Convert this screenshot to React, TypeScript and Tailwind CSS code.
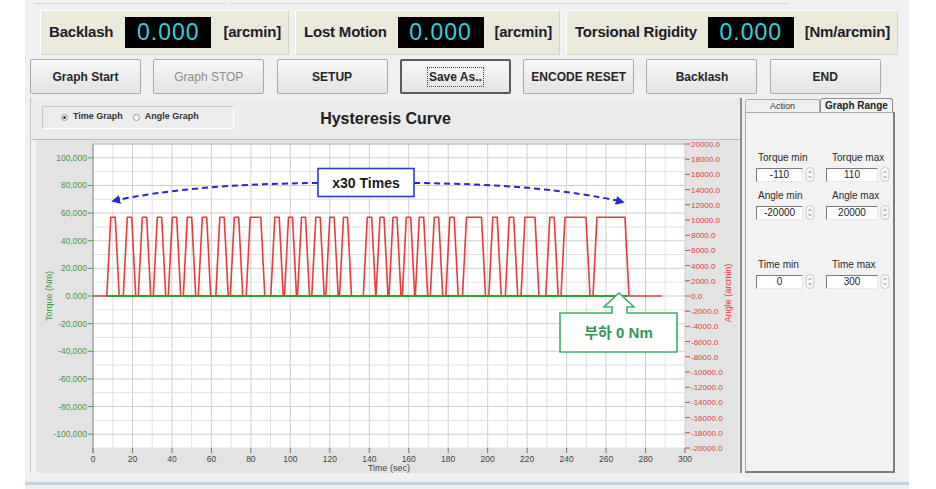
import React from 'react';

const SANS = '"Liberation Sans", Arial, sans-serif';

// chart scale helpers, page coordinates (svg viewBox starts at the panel origin)
const xs = (t: number) => 93 + (t * 592) / 300;
const ys = (v: number) => 296 - (v * 152) / 110;
const ya = (a: number) => 296 - (a * 152) / 20000;

// [center x, half width of the flat top]
const pulses: [number, number][] = [
  [113, 2.2], [129.5, 2.2], [144.5, 2.2], [159.5, 2.2], [174.5, 2.2], [189.5, 2.2], [204.5, 2.2], [222, 2.2], [236.5, 2.2], [255.5, 5.3],
  [277, 2.2], [290.5, 2], [303.5, 2], [318, 2.2], [332, 2.2], [345.5, 2], [369.5, 2.2], [382, 2], [395, 2], [408.5, 2.2],
  [421.5, 2.2], [436.5, 2.2], [452, 2.2], [474, 7.5], [495, 2.2], [511.5, 2.2], [530, 5], [552, 2.2], [575.5, 10.5], [611, 14],
];

const buildPulsePath = () => {
  const top = ys(57);
  const r = 4;
  let d = `M93,296`;
  pulses.forEach(([c, t]) => {
    d += ` L${c - t - r},296 L${c - t},${top} L${c + t},${top} L${c + t + r},296`;
  });
  d += ` L662,296`;
  return d;
};

const Indicator = ({ label, unit, width }: { label: string; unit: string; width: string }) => (
  <div
    className={`${width} h-[45px] flex items-center justify-between pl-[8px] pr-[7px] bg-[#ebe9da] border border-[#d6d4c6] border-t-white border-l-white`}
  >
    <span className="text-[15px] font-bold text-[#1c1c2a] tracking-[-0.2px]">{label}</span>
    <div className="w-[86px] h-[31px] bg-black flex items-center justify-center">
      <span className="text-[23px] text-[#2fd3dc] tracking-[1px] leading-none">0.000</span>
    </div>
    <span className="text-[15px] font-bold text-[#1c1c2a] tracking-[-0.2px]">{unit}</span>
  </div>
);

const Btn = ({ label, disabled, focused }: { label: string; disabled?: boolean; focused?: boolean }) => (
  <button
    className={`w-[111px] h-[35px] flex items-center justify-center rounded-[2px] bg-gradient-to-b from-[#f7f7f7] to-[#e4e4e4] text-[12px] ${
      focused ? 'border-2 border-[#5a5a5a]' : 'border border-[#a9a9a9]'
    } ${disabled ? 'text-[#8c8c8c]' : 'font-bold text-[#262626]'}`}
  >
    {focused ? <span className="px-[1px] outline outline-1 outline-dotted outline-[#444]">{label}</span> : label}
  </button>
);

const Spinner = () => (
  <svg width="10" height="15" viewBox="0 0 10 15" className="ml-[2px]">
    <rect x="1" y="0.5" width="8" height="14" rx="4" fill="#f7f7f7" stroke="#c9c9c9" />
    <path d="M3.5,6 L5,4 L6.5,6" fill="none" stroke="#a0a0a0" strokeWidth="1" />
    <path d="M3.5,9 L5,11 L6.5,9" fill="none" stroke="#a0a0a0" strokeWidth="1" />
  </svg>
);

const NumField = ({ value, w }: { value: string; w: string }) => (
  <div className="flex items-center">
    <div
      className={`${w} h-[14px] bg-white border border-t-[#7a7a7a] border-l-[#7a7a7a] border-b-[#e8e8e8] border-r-[#e8e8e8] text-[10px] leading-[12px] text-[#222] text-center`}
    >
      {value}
    </div>
    <Spinner />
  </div>
);

const RangeRow = ({ l1, l2, v1, v2 }: { l1: string; l2: string; v1: string; v2: string }) => (
  <>
    <div className="flex h-[12px] text-[10px] leading-[12px] text-[#2a2a2a]">
      <span className="w-[72px] pl-[2px]">{l1}</span>
      <span className="pl-[4px]">{l2}</span>
    </div>
    <div className="flex mt-[3px]">
      <div className="w-[70px]">
        <NumField value={v1} w="w-[47px]" />
      </div>
      <NumField value={v2} w="w-[52px]" />
    </div>
  </>
);

const Chart = () => {
  const vLines = Array.from({ length: 31 }, (_, i) => i * 10);
  const hLines = Array.from({ length: 23 }, (_, i) => -110 + i * 10);
  const leftLabels = [100, 80, 60, 40, 20, 0, -20, -40, -60, -80, -100];
  const rightLabels = Array.from({ length: 21 }, (_, i) => 20000 - i * 2000);
  const xLabels = Array.from({ length: 16 }, (_, i) => i * 20);
  const fmtLeft = (v: number) => (v === 0 ? '0.000' : `${v < 0 ? '-' : ''}${Math.abs(v)},000`);

  return (
    <svg width="708" height="333" viewBox="31 140 708 333" fontFamily={SANS}>
      <defs>
        <marker id="ah" viewBox="0 0 10 10" refX="8" refY="5" markerWidth="4.5" markerHeight="4.5" orient="auto-start-reverse">
          <path d="M0,0 L10,5 L0,10 Z" fill="#2626d6" />
        </marker>
      </defs>
      <rect x="31" y="140" width="708" height="333" fill="#e3e3e3" />
      <rect x="31" y="140" width="5" height="333" fill="#f1f1f1" />
      <rect x="93" y="144" width="592" height="304" fill="#ffffff" />

      {vLines.map((t) => (
        <line key={`v${t}`} x1={xs(t)} y1={144} x2={xs(t)} y2={448} stroke={t % 20 === 0 ? '#cfcfcf' : '#e2e2e2'} strokeWidth="1" />
      ))}
      {hLines.map((v) => (
        <line key={`h${v}`} x1={93} y1={ys(v)} x2={685} y2={ys(v)} stroke={v % 20 === 0 ? '#cfcfcf' : '#e2e2e2'} strokeWidth="1" />
      ))}
      <line x1="93" y1="144" x2="93" y2="453" stroke="#8a8a8a" strokeWidth="1" />
      <line x1="93" y1="144" x2="685" y2="144" stroke="#b5b5b5" strokeWidth="1" />

      {leftLabels.map((v) => (
        <g key={`l${v}`}>
          <line x1="88" y1={ys(v)} x2="93" y2={ys(v)} stroke="#4a9a4a" />
          <text x="87" y={ys(v) + 3} fontSize="8.5" fill="#3f983f" textAnchor="end">
            {fmtLeft(v)}
          </text>
        </g>
      ))}
      <text x="52" y="296" fontSize="9" fill="#3f983f" textAnchor="middle" transform="rotate(-90 52 296)">
        Torque (Nm)
      </text>

      {rightLabels.map((a) => (
        <g key={`r${a}`}>
          <line x1="685" y1={ya(a)} x2="690" y2={ya(a)} stroke="#e04040" />
          <text x="691" y={ya(a) + 3} fontSize="8" fill="#e03c3c">
            {`${a < 0 ? '-' : ''}${Math.abs(a)}.0`}
          </text>
        </g>
      ))}
      <text x="731" y="293" fontSize="9" fill="#e03c3c" textAnchor="middle" transform="rotate(-90 731 293)">
        Angle (arcmin)
      </text>

      {xLabels.map((t) => (
        <g key={`x${t}`}>
          <line x1={xs(t)} y1="448" x2={xs(t)} y2="453" stroke="#707070" />
          <text x={xs(t)} y="462" fontSize="8.5" fill="#444" textAnchor="middle">
            {t}
          </text>
        </g>
      ))}
      <text x="389" y="471" fontSize="9" fill="#444" textAnchor="middle">
        Time (sec)
      </text>

      {/* data */}
      <path d={buildPulsePath()} fill="none" stroke="#ea3a3e" strokeWidth="1.6" strokeLinejoin="round" />
      <line x1="107" y1="296" x2="628" y2="296" stroke="#2f9b32" strokeWidth="2" />

      {/* annotations */}
      <path d="M318,183 Q190,184 113,201" fill="none" stroke="#2626d6" strokeWidth="2" strokeDasharray="6 4" markerEnd="url(#ah)" />
      <path d="M414,183 Q545,184 623,202" fill="none" stroke="#2626d6" strokeWidth="2" strokeDasharray="6 4" markerEnd="url(#ah)" />
      <rect x="318" y="168.5" width="96" height="28" fill="#fff" stroke="#2b3fc9" strokeWidth="1.6" />
      <text x="366" y="187.5" fontSize="14" fontWeight="bold" fill="#1a1a1a" textAnchor="middle">
        x30 Times
      </text>

      <polygon
        points="560,313 612,313 612,307 604,307 619,293 634,307 627,307 627,313 677,313 677,352 560,352"
        fill="#fff"
        stroke="#3fae6a"
        strokeWidth="1.6"
        strokeLinejoin="miter"
      />
      <text
        x="618.5"
        y="338"
        fontSize="15"
        fontWeight="bold"
        fill="#2f9a57"
        textAnchor="middle"
        fontFamily='"Liberation Sans", "Noto Sans CJK KR", sans-serif'
      >
        부하 0 Nm
      </text>
    </svg>
  );
};

const App = () => {
  return (
    <div className="w-[936px] h-[489px] bg-white overflow-hidden font-['Liberation_Sans',Arial,sans-serif]">
      <div className="ml-[25px] w-[884px] h-full bg-[#f0f0f0] flex flex-col">
        {/* faint frame edges along the top */}
        <div className="h-[10px] pt-[3px] pl-[10px] flex gap-[4px]">
          <div className="w-[190px] h-[1px] bg-[#d2d2d2]" />
          <div className="w-[560px] h-[1px] bg-[#d8d8d8]" />
        </div>

        {/* indicators */}
        <div className="flex gap-[6px] pl-[15px]">
          <Indicator label="Backlash" unit="[arcmin]" width="w-[249px]" />
          <Indicator label="Lost Motion" unit="[arcmin]" width="w-[265px]" />
          <Indicator label="Torsional Rigidity" unit="[Nm/arcmin]" width="w-[332px]" />
        </div>

        {/* buttons */}
        <div className="flex gap-[12.3px] pl-[5px] mt-[4px]">
          <Btn label="Graph Start" />
          <Btn label="Graph STOP" disabled />
          <Btn label="SETUP" />
          <Btn label="Save As.." focused />
          <Btn label="ENCODE RESET" />
          <Btn label="Backlash" />
          <Btn label="END" />
        </div>

        {/* main area */}
        <div className="flex mt-[4px] pl-[5px]">
          <div className="w-[712px] h-[375px] flex flex-col border-l border-[#c4c4c4] border-r-2 border-r-[#8c8c8c] bg-[#ebebeb]">
            <div className="h-[42px] relative flex items-center border-b border-[#bdbdbd]">
              <div className="ml-[11px] mt-[-3px] w-[192px] h-[23px] border border-[#c6c6c6] border-b-white border-r-white bg-[#ececec] flex items-center gap-[10px] pl-[18px] text-[9px] font-bold text-[#333]">
                <span className="flex items-center gap-[5px]">
                  <span className="w-[7px] h-[7px] rounded-full border border-[#9a9a9a] bg-white flex items-center justify-center">
                    <span className="w-[3px] h-[3px] rounded-full bg-[#333]" />
                  </span>
                  Time Graph
                </span>
                <span className="flex items-center gap-[5px]">
                  <span className="w-[7px] h-[7px] rounded-full border border-[#9a9a9a] bg-white" />
                  Angle Graph
                </span>
              </div>
              <div className="absolute left-0 right-0 top-[9px] text-center text-[16px] font-bold text-[#202020] pointer-events-none">
                Hysteresis Curve
              </div>
            </div>
            <Chart />
          </div>

          {/* tab panel */}
          <div className="ml-[3px] w-[150px] h-[375px] flex flex-col">
            <div className="flex h-[14px] items-end">
              <div className="w-[75px] h-[13px] border border-[#a8a8a8] border-b-0 rounded-t-[3px] bg-[#f0f0f0] text-[9px] leading-[12px] text-center text-[#333]">
                Action
              </div>
              <div className="w-[73px] h-[14px] border border-[#8c8c8c] border-b-0 rounded-t-[3px] bg-[#f4f4f4] text-[10px] leading-[13px] font-bold text-center text-[#222]">
                Graph Range
              </div>
            </div>
            <div className="flex-1 bg-[#f2f2f2] border border-[#a8a8a8] border-r-2 border-b-2 border-r-[#7e7e7e] border-b-[#7e7e7e] pl-[10px]">
              <div className="mt-[39px]">
                <RangeRow l1="Torque min" l2="Torque max" v1="-110" v2="110" />
              </div>
              <div className="mt-[8px]">
                <RangeRow l1="Angle min" l2="Angle max" v1="-20000" v2="20000" />
              </div>
              <div className="mt-[39px]">
                <RangeRow l1="Time min" l2="Time max" v1="0" v2="300" />
              </div>
            </div>
          </div>
        </div>

        {/* bottom edge */}
        <div className="mt-[9px] h-[3px] bg-[#bcd2ec]" />
      </div>
    </div>
  );
};

export default App;
